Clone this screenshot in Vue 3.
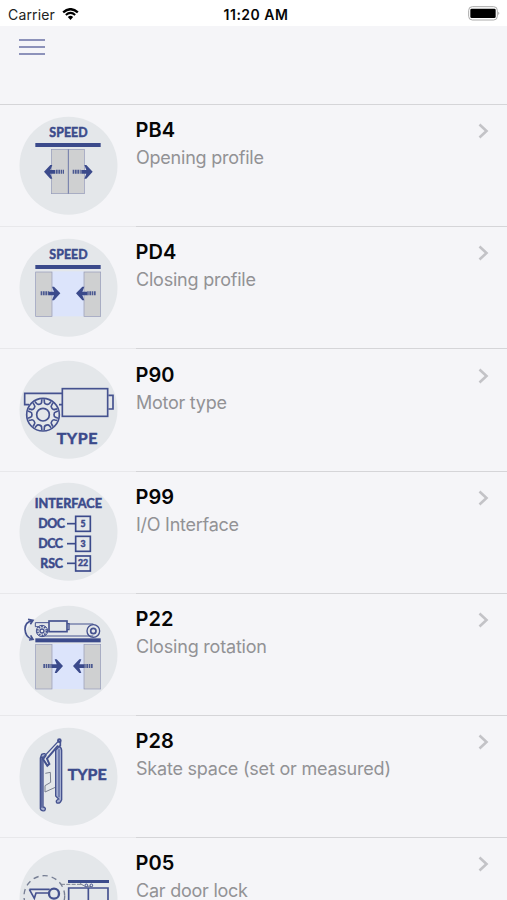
<script setup>
const rows = [
  { code: 'PB4', label: 'Opening profile', icon: 'opening', width: 128 },
  { code: 'PD4', label: 'Closing profile', icon: 'closing', width: 120 },
  { code: 'P90', label: 'Motor type', icon: 'motor', width: 91 },
  { code: 'P99', label: 'I/O Interface', icon: 'interface', width: 103 },
  { code: 'P22', label: 'Closing rotation', icon: 'rotation', width: 131 },
  { code: 'P28', label: 'Skate space (set or measured)', icon: 'skate', width: 255 },
  { code: 'P05', label: 'Car door lock', icon: 'lock', width: 112 },
]

const ports = [
  { name: 'DOC', value: '5', y: 143, x: 85, w: 80 },
  { name: 'DCC', value: '3', y: 203, x: 85, w: 74 },
  { name: 'RSC', value: '22', y: 262, x: 91, w: 68 },
]

const notches = Array.from({ length: 10 }, (_, i) => i * 36 + 18)
</script>

<template>
  <div class="screen">
    <header class="status">
      <div class="carrier">
        <span>Carrier</span>
        <svg class="wifi" viewBox="0 0 50 36">
          <path d="M3 13Q25-6 47 13" stroke-width="7" />
          <path d="M11 21Q25 8 39 21" stroke-width="6" />
          <path class="dot" d="M17 27Q25 20 33 27L25 36Z" />
        </svg>
      </div>
      <div class="clock">11:20 AM</div>
      <div class="power">
        <svg class="battery" viewBox="0 0 96 45">
          <rect x="2" y="2" width="86" height="40" rx="11" class="shell" />
          <rect x="7" y="8" width="76" height="28" rx="4" />
          <path d="M91 17Q97 22 91 27Z" class="cap" />
        </svg>
      </div>
    </header>

    <nav class="bar">
      <div class="menu"><i /><i /><i /></div>
    </nav>

    <main>
      <section v-for="row in rows" :key="row.code" class="row">
        <svg class="badge" viewBox="27 18 297 297">
          <circle cx="175.500" cy="167" r="147" class="disc" />

          <g v-if="row.icon === 'opening'">
            <text x="118" y="82" class="word" textLength="115" font-size="37">SPEED</text>
            <rect x="76" y="99" width="196" height="12" class="ink" />
            <rect x="124" y="118" width="99" height="133" class="door" />
            <path d="M175 118V251" class="seam" />
            <path d="M102 185L121 165H127L121 180H136V191H121L127 206H121Z" class="ink" />
            <path d="M138 185H162" class="dash" />
            <path d="M248 185L229 165H223L229 180H214V191H229L223 206H229Z" class="ink" />
            <path d="M188 185H212" class="dash" />
          </g>

          <g v-else-if="row.icon === 'closing' || row.icon === 'rotation'">
            <template v-if="row.icon === 'closing'">
              <text x="118" y="82" class="word" textLength="115" font-size="37">SPEED</text>
              <rect x="76" y="99" width="196" height="12" class="ink" />
            </template>
            <template v-else>
              <rect x="76" y="118" width="196" height="12" class="ink" />
              <g class="line">
                <path d="M76 83V71H117M177 75H250M76 83H85M96 111H250" />
                <rect x="117" y="66" width="54" height="32" stroke-width="5" />
                <path d="M171 74H177V92H171" stroke-width="4" />
                <circle cx="96" cy="96" r="17" />
                <circle cx="96" cy="96" r="13" stroke-width="5" stroke-dasharray="5 3.170" />
                <circle cx="96" cy="96" r="6" stroke-width="4" />
                <circle cx="250" cy="96" r="19" stroke-width="4" />
                <circle cx="250" cy="96" r="8" stroke-width="5" />
                <path d="M67 65Q45 69 45 91Q46 114 65 120M54 61L69 64L61 76M57 123L69 121L62 109" stroke-width="5" />
              </g>
            </template>
            <g :transform="row.icon === 'rotation' ? 'translate(0 17)' : ''">
              <rect x="127" y="118" width="94" height="135" class="gap" />
              <rect x="77" y="120" width="49" height="133" class="door" />
              <rect x="222" y="120" width="50" height="133" class="door" />
              <g :transform="row.icon === 'rotation' ? 'translate(8 0)' : ''">
                <path d="M92 184H117" class="dash" />
                <path d="M151 184L132 164H126L132 179H117V190H132L126 205H132Z" class="ink" />
              </g>
              <g :transform="row.icon === 'rotation' ? 'translate(-9 0)' : ''">
                <path d="M257 184H232" class="dash" />
                <path d="M198 184L217 164H223L217 179H232V190H217L223 205H217Z" class="ink" />
              </g>
            </g>
          </g>

          <g v-else-if="row.icon === 'motor'" class="line" stroke-width="5">
            <path d="M57 152H44V118H157M147 152H157" />
            <rect x="157" y="104" width="136" height="83" />
            <path d="M295 124H309V165H295" />
            <circle cx="99" cy="182" r="49" />
            <circle cx="99" cy="182" r="19" />
            <path
              v-for="a in notches"
              :key="a"
              :transform="`rotate(${a} 99 182)`"
              d="M88 137L91 144Q92 149 99 149Q106 149 107 144L110 137"
            />
            <text x="140" y="269" class="word" textLength="122" font-size="48">TYPE</text>
          </g>

          <g v-else-if="row.icon === 'interface'">
            <text x="74" y="97" class="word" textLength="202" font-size="38">INTERFACE</text>
            <g v-for="p in ports" :key="p.name">
              <text :x="p.x" :y="p.y + 13" class="word" :textLength="p.w" font-size="37">{{ p.name }}</text>
              <path :d="`M171 ${p.y}H195`" class="lead" />
              <rect x="197" :y="p.y - 22" width="44" height="45" class="port" />
              <text x="219" :y="p.y + 9" class="word" text-anchor="middle" font-size="26">{{ p.value }}</text>
            </g>
          </g>

          <g v-else-if="row.icon === 'skate'">
            <g class="line">
              <path d="M106 157L121 154L122 184L105 194V213L138 198" class="thin" />
              <path d="M91 111V263Q93 271 104 269Q110 260 99 258V116L108 104Q106 94 95 100Z" class="rail" />
              <path d="M137 88V225L146 234Q135 239 141 246Q150 249 155 236V88Q154 78 147 77Z" class="rail" />
              <path d="M147 85V229M95 113V260" class="core" />
              <path d="M94 107L112 134L118 129L111 113L144 74" stroke-width="6" />
              <path d="M97 112L144 62" stroke-width="4" />
              <circle cx="148" cy="59" r="4" stroke-width="6" />
              <path d="M151 62V74L145 77" stroke-width="5" />
            </g>
            <text x="173" y="178" class="word" textLength="117" font-size="48">TYPE</text>
          </g>

          <g v-else class="line">
            <circle cx="103" cy="159" r="61" class="orbit" />
            <path d="M58 139H119M58 139L73 166L78 150H117" stroke-width="5" />
            <circle cx="132" cy="152" r="15" stroke-width="7" />
            <rect x="174" y="111" width="123" height="9" class="ink" />
            <path d="M176 180V135H294V180M235 135V180" stroke-width="5" />
            <path d="M153 124H216L224 130H249M211 120L217 127" class="thin" stroke-dasharray="12 4" />
            <circle cx="229" cy="127" r="4" />
            <circle cx="244" cy="127" r="4" />
          </g>
        </svg>

        <div class="body">
          <div class="copy">
            <h2>{{ row.code }}</h2>
            <svg class="label" height="26" :width="row.width + 4">
              <text x="0" y="18" :textLength="row.width">{{ row.label }}</text>
            </svg>
          </div>
          <svg class="chevron" viewBox="0 0 12 18"><path d="M2.500 2.500L9.500 9L2.500 15.500" /></svg>
        </div>
      </section>
    </main>
  </div>
</template>

<style>
body {
  overflow: hidden;
}
</style>

<style scoped>
.screen {
  width: 507px;
  height: 900px;
  overflow: hidden;
  background: #f5f5f8;
  font-family: Inter, "Liberation Sans", sans-serif;
  color: #060606;
}
.status {
  display: grid;
  grid-template-columns: 1fr auto 1fr;
  height: 26px;
  padding: 0 7px 0 8px;
  align-items: center;
  background: #fff;
  font-size: 14px;
}
.carrier {
  display: flex;
  align-items: center;
  gap: 7px;
  color: #222;
  padding-top: 2px;
  letter-spacing: 0.150px;
}
.wifi {
  width: 17px;
  height: 12px;
  fill: none;
  stroke: #000;
}
.wifi .dot {
  fill: #000;
  stroke: none;
}
.clock {
  font-weight: 600;
  padding: 2px 0 0 4px;
  letter-spacing: 0.500px;
}
.power {
  display: flex;
  justify-content: flex-end;
}
.battery {
  width: 32px;
  height: 15px;
}
.shell {
  fill: #fff;
  stroke: #aaa;
  stroke-width: 3;
}
.cap {
  fill: #999;
}
.bar {
  box-sizing: border-box;
  height: 79px;
  padding: 13px 19px;
  border-bottom: 1px solid #d5d5d8;
}
.menu {
  display: flex;
  flex-direction: column;
  gap: 5px;
  width: 26px;
}
.menu i {
  height: 2px;
  background: #8d92ba;
}
.row {
  display: flex;
  height: 122.200px;
  box-shadow: inset 0 -1px #e8e8eb;
}
.badge {
  flex: none;
  width: 99px;
  height: 99px;
  margin: 10.900px 18px 0 19px;
}
.body {
  box-sizing: border-box;
  flex: 1;
  display: flex;
  justify-content: space-between;
  padding: 13.200px 18px 0 0;
  border-bottom: 1px solid #d5d5d8;
}
.copy {
  margin-left: -0.400px;
}
h2 {
  margin: 0;
  font-size: 20px;
  line-height: 25px;
  font-weight: 600;
}
.label {
  display: block;
  margin-top: 3px;
  font-size: 18px;
  fill: #929295;
}
.chevron {
  width: 12px;
  height: 18px;
  margin-top: 4px;
  fill: none;
  stroke: #c3c3c7;
  stroke-width: 2.600;
}
.disc {
  fill: #e4e7ea;
}
.word {
  font-family: Lato, sans-serif;
  font-weight: 700;
  fill: #3b4a8b;
  stroke: #3b4a8b;
  stroke-width: 1.500;
}
.ink {
  fill: #3b4a8b;
  stroke: none;
}
.door {
  fill: #cfd0d1;
  stroke: #9298b9;
  stroke-width: 2;
}
.gap {
  fill: #dce4fb;
}
.seam {
  stroke: #6d77a8;
  stroke-width: 3;
}
.dash {
  stroke: #4b5991;
  stroke-width: 12;
  stroke-dasharray: 5 2;
}
.line {
  fill: none;
  stroke: #45528f;
}
.line:not([stroke-width]) {
  stroke-width: 3;
}
.lead {
  stroke: #3b4a8b;
  stroke-width: 5;
}
.port {
  fill: none;
  stroke: #3b4a8b;
  stroke-width: 5;
}
.thin {
  stroke: #7b8190;
  stroke-width: 3;
}
.rail {
  stroke: #45528f;
  stroke-width: 4;
  fill: #a5afd0;
}
.core {
  stroke: #5c699f;
  stroke-width: 4;
}
.orbit {
  stroke: #777f94;
  stroke-width: 4;
  stroke-dasharray: 16 12;
}
</style>
